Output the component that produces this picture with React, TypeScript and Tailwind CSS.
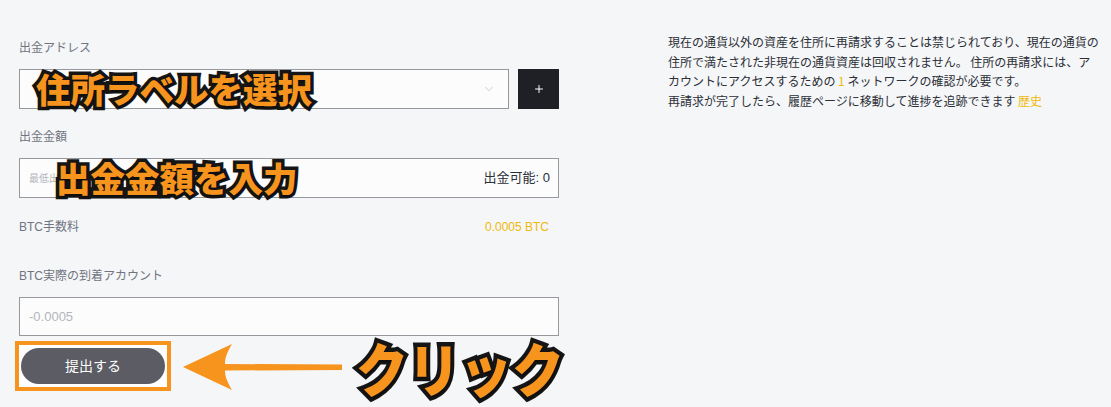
import { ChevronDown, Plus } from 'lucide-react';

const font = "font-['Liberation_Sans','Noto_Sans_CJK_JP',sans-serif]";
const callout =
  "absolute font-['Noto_Sans_CJK_JP',sans-serif] font-black text-[#f7941d] whitespace-nowrap leading-none [paint-order:stroke_fill] [-webkit-text-stroke:7px_#151515] [text-shadow:1px_2px_2px_rgba(0,0,0,0.35)]";

function Arrow() {
  return (
    <svg width="170" height="54" viewBox="0 0 170 54" className="absolute left-[180px] top-[340px]">
      <path
        d="M3 27 L52 4 C46 14 45 19 45 24 L162 24.5 L162 30 L45 30.5 C45 35 46 40 52 50 Z"
        fill="#f7941d"
      />
    </svg>
  );
}

export default function App() {
  return (
    <div className={`relative w-[1111px] h-[407px] overflow-hidden bg-[#f5f6f8] ${font}`}>
      <div className="flex">
        {/* form column */}
        <div className="w-[540px] ml-[19px] pt-[40px] flex flex-col">
          <div className="text-[12px] leading-[16px] text-[#6f7580]">出金アドレス</div>
          <div className="mt-[13px] flex gap-[9px]">
            <div className="flex-1 h-[40px] border border-[#96989d] bg-[#fcfcfd] flex items-center justify-end pr-[12px]">
              <ChevronDown className="w-[14px] h-[14px] text-[#b9bcc2]" strokeWidth={1.2} />
            </div>
            <div className="w-[41px] h-[40px] bg-[#1e2026] flex items-center justify-center">
              <Plus className="w-[12px] h-[12px] text-white" strokeWidth={2} />
            </div>
          </div>

          <div className="mt-[20px] text-[12px] leading-[16px] text-[#6f7580]">出金金額</div>
          <div className="mt-[13px] h-[40px] border border-[#96989d] bg-[#fcfcfd] flex items-center justify-between pl-[9px] pr-[8px]">
            <span className="text-[10px] text-[#b3b6bb]">最低出金額: 0.001</span>
            <span className="text-[13px] text-[#2b2f36]">出金可能: 0</span>
          </div>

          <div className="mt-[21px] flex justify-between items-center text-[12px] leading-[16px]">
            <span className="text-[#6f7580]">BTC手数料</span>
            <span className="text-[#f0b90b] pr-[10px]">0.0005 BTC</span>
          </div>

          <div className="mt-[33px] text-[12px] leading-[16px] text-[#6f7580]">BTC実際の到着アカウント</div>
          <div className="mt-[13px] h-[39px] border border-[#96989d] bg-[#fcfcfd] flex items-center pl-[9px]">
            <span className="text-[13px] text-[#b3b6bb]">-0.0005</span>
          </div>

          <div className="mt-[5px] -ml-[4px] w-[156px] h-[50px] border-[4px] border-[#f7941d] bg-white flex items-center justify-center">
            <button className="w-[144px] h-[36px] rounded-full bg-[#5b5c64] text-white text-[14px]">
              提出する
            </button>
          </div>
        </div>

        {/* notice column */}
        <div className="ml-[109px] pt-[32px] text-[12px] leading-[19.5px] text-[#2b2f36] font-['Noto_Sans_CJK_JP',sans-serif]">
          <div className="whitespace-nowrap">現在の通貨以外の資産を住所に再請求することは禁じられており、現在の通貨の</div>
          <div className="whitespace-nowrap">住所で満たされた非現在の通貨資産は回収されません。 住所の再請求には、ア</div>
          <div className="whitespace-nowrap">
            カウントにアクセスするための <span className="text-[#f0b90b]">1</span> ネットワークの確認が必要です。
          </div>
          <div className="whitespace-nowrap">
            再請求が完了したら、履歴ページに移動して進捗を追跡できます <span className="text-[#f0b90b]">歴史</span>
          </div>
        </div>
      </div>

      {/* annotations */}
      <div className={`${callout} left-[36px] top-[71px] text-[34.5px]`}>住所ラベルを選択</div>
      <div className={`${callout} left-[56px] top-[160px] text-[34.5px]`}>出金金額を入力</div>
      <Arrow />
      <div className={`${callout} left-[356px] top-[338px] text-[52px] [-webkit-text-stroke:8px_#151515] scale-y-[1.12] origin-top`}>クリック</div>
    </div>
  );
}
